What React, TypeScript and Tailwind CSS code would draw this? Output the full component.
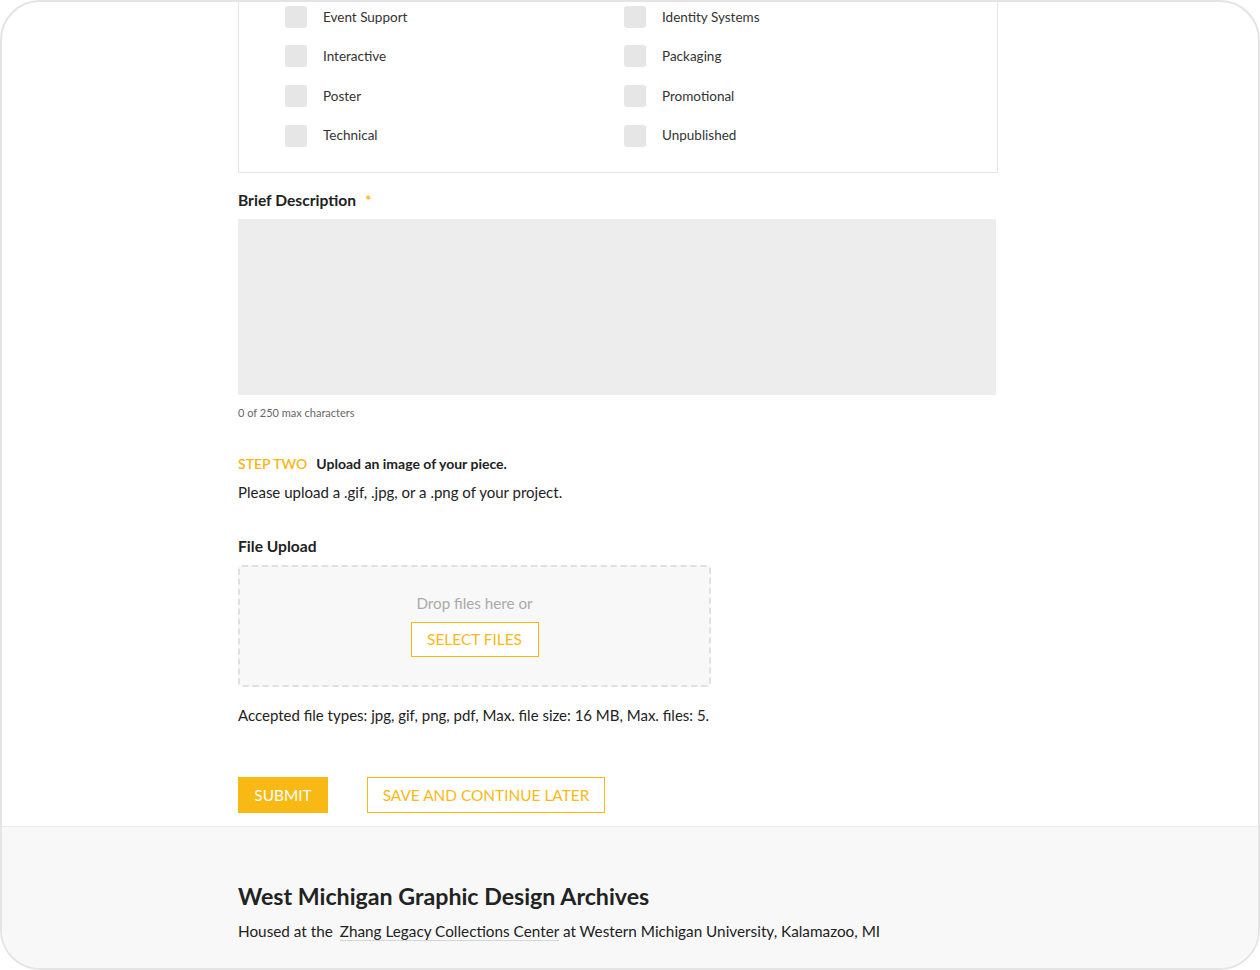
import React from "react";

const left = ["Event Support", "Interactive", "Poster", "Technical"];
const right = ["Identity Systems", "Packaging", "Promotional", "Unpublished"];

function Check({ label }: { label: string }) {
  return (
    <div className="flex items-center gap-4 h-[39.6px]">
      <span className="w-[22px] h-[22px] rounded-[3px] bg-[#e6e6e6] shrink-0" />
      <span className="text-[13.5px] text-[#333]">{label}</span>
    </div>
  );
}

export default function App() {
  return (
    <div className="w-[1260px] h-[970px] bg-white">
      <div className="w-full h-full border-2 border-[#e4e4e4] rounded-[40px] overflow-hidden bg-white flex flex-col font-['Lato',sans-serif] text-[#222]">
        <main className="flex-1 pl-[236px]">
          <div className="w-[760px] border border-[#e6e6e6] mt-[-20px] pt-[14px] pb-[17px] pl-[46px] grid grid-cols-[339px_1fr]">
            <div>
              {left.map((l) => (
                <Check key={l} label={l} />
              ))}
            </div>
            <div>
              {right.map((l) => (
                <Check key={l} label={l} />
              ))}
            </div>
          </div>

          <div className="mt-[16px] text-[15.6px] leading-[22px] font-bold text-[#222]">
            Brief Description
            <span className="ml-[9px] text-[#f9b915] font-bold">*</span>
          </div>
          <div className="mt-[8px] w-[758px] h-[176px] bg-[#ededed]" />
          <div className="mt-[10px] text-[11px] leading-[16px] text-[#666]">
            0 of 250 max characters
          </div>

          <div className="mt-[33px] text-[14px] leading-[20px] flex gap-[9px]">
            <span className="text-[#f9b512] font-semibold">STEP TWO</span>
            <span className="font-bold text-[#222]">Upload an image of your piece.</span>
          </div>
          <div className="mt-[6px] text-[15px] leading-[24px] text-[#222]">
            Please upload a .gif, .jpg, or a .png of your project.
          </div>

          <div className="mt-[31px] text-[15.6px] leading-[22px] font-bold text-[#222]">
            File Upload
          </div>
          <div className="mt-[8px] w-[473px] h-[122px] border-2 border-dashed border-[#e0e0e0] rounded-[4px] bg-[#f8f8f8] flex flex-col items-center pt-[24px]">
            <div className="text-[15.2px] leading-[24px] text-[#aaa]">Drop files here or</div>
            <div className="mt-[7px] h-[35px] w-[128px] border border-[#f9b915] flex items-center justify-center text-[15.4px] text-[#f9b915] bg-white">
              SELECT FILES
            </div>
          </div>
          <div className="mt-[16px] text-[15px] leading-[24px] text-[#222]">
            Accepted file types: jpg, gif, png, pdf, Max. file size: 16 MB, Max. files: 5.
          </div>

          <div className="mt-[50px] flex gap-[39px]">
            <div className="h-[36px] w-[90px] bg-[#f9b915] text-white text-[15.4px] flex items-center justify-center">
              SUBMIT
            </div>
            <div className="h-[36px] w-[238px] border border-[#f9b915] text-[#f9b915] text-[15.4px] flex items-center justify-center">
              SAVE AND CONTINUE LATER
            </div>
          </div>
        </main>

        <footer className="h-[142px] border-t border-[#ebebeb] bg-[#f8f8f8] pl-[236px] pt-[53px]">
          <div className="text-[23.2px] leading-[32px] font-bold text-[#222]">
            West Michigan Graphic Design Archives
          </div>
          <div className="mt-[7px] text-[15.3px] leading-[24px] text-[#222]">
            Housed at the{" "}
            <span className="ml-[3px] border-b border-[#d6d6d6]">Zhang Legacy Collections Center</span>{" "}
            at Western Michigan University, Kalamazoo, MI
          </div>
        </footer>
      </div>
    </div>
  );
}
